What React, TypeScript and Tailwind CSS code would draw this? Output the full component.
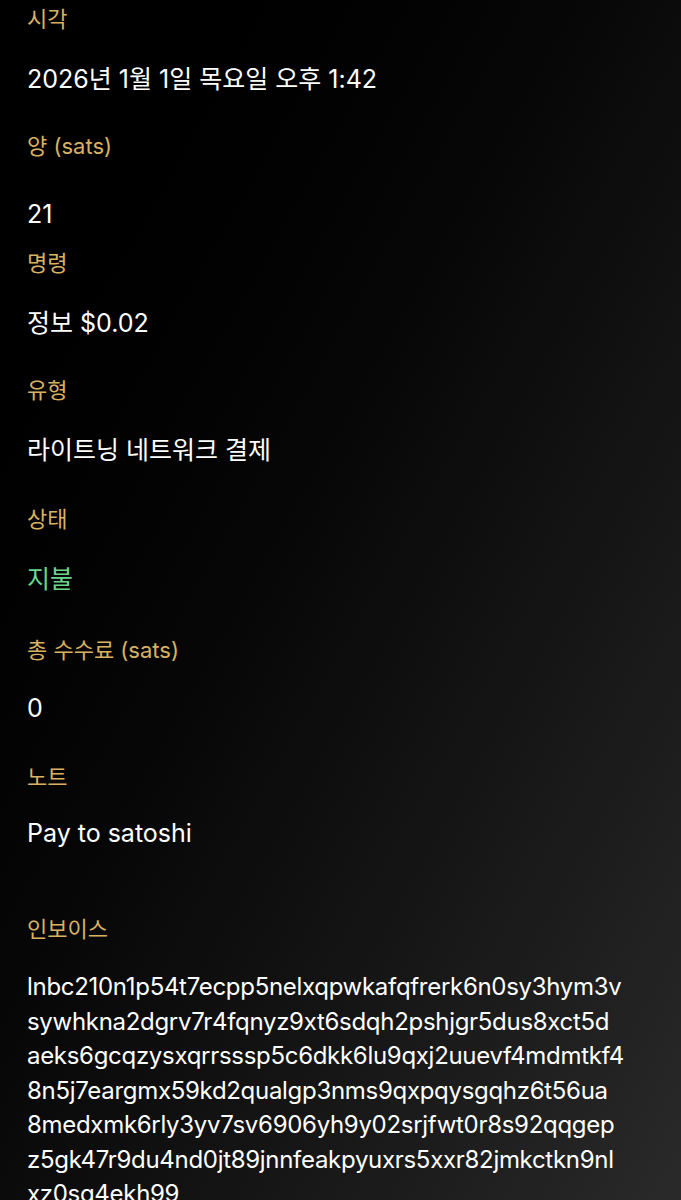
const invoiceLines = [
  "lnbc210n1p54t7ecpp5nelxqpwkafqfrerk6n0sy3hym3v",
  "sywhkna2dgrv7r4fqnyz9xt6sdqh2pshjgr5dus8xct5d",
  "aeks6gcqzysxqrrsssp5c6dkk6lu9qxj2uuevf4mdmtkf4",
  "8n5j7eargmx59kd2qualgp3nms9qxpqysgqhz6t56ua",
  "8medxmk6rly3yv7sv6906yh9y02srjfwt0r8s92qqgep",
  "z5gk47r9du4nd0jt89jnnfeakpyuxrs5xxr82jmkctkn9nl",
  "xz0sq4ekh99",
];

type Row = { label: string; value: string; top: string; gap: string; green?: boolean };

const rows: Row[] = [
  { label: "시각", value: "2026년 1월 1일 목요일 오후 1:42", top: "mt-[5px]", gap: "mt-[29px]" },
  { label: "양 (sats)", value: "21", top: "mt-[36px]", gap: "mt-[37px]" },
  { label: "명령", value: "정보 $0.02", top: "mt-[18px]", gap: "mt-[29px]" },
  { label: "유형", value: "라이트닝 네트워크 결제", top: "mt-[36px]", gap: "mt-[29px]" },
  { label: "상태", value: "지불", top: "mt-[38px]", gap: "mt-[29px]", green: true },
  { label: "총 수수료 (sats)", value: "0", top: "mt-[40px]", gap: "mt-[27px]" },
  { label: "노트", value: "Pay to satoshi", top: "mt-[38px]", gap: "mt-[25px]" },
];

export default function App() {
  return (
    <div
      className="min-h-[1200px] w-full overflow-hidden bg-gradient-to-br from-black via-[#0b0b0b] to-[#2a2a2a] px-[27px] text-white"
      style={{ fontFamily: "Inter, 'Noto Sans CJK KR', sans-serif" }}
    >
      {rows.map((r) => (
        <div key={r.label} className={r.top}>
          <div className="text-[22px] leading-[28px] text-[#d8b262]">{r.label}</div>
          <div
            className={
              r.gap +
              " text-[25px] leading-[34px] " +
              (r.green ? "text-[#6cd58c]" : "text-white")
            }
          >
            {r.value}
          </div>
        </div>
      ))}
      <div className="mt-[65px]">
        <div className="text-[22px] leading-[28px] text-[#d8b262]">인보이스</div>
        <div className="mt-[27px] text-[24px] leading-[34.5px] tracking-[-0.3px]">
          {invoiceLines.map((line) => (
            <div key={line} className="whitespace-nowrap">
              {line}
            </div>
          ))}
        </div>
      </div>
    </div>
  );
}
